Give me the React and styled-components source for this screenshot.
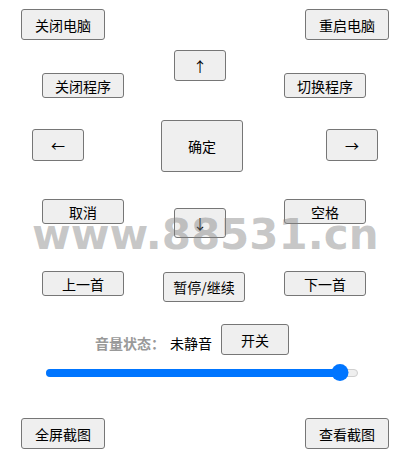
import React from "react";
import styled, { createGlobalStyle } from "styled-components";

const Global = createGlobalStyle`
  html, body { margin: 0; padding: 0; background: #fff; }
  body { font-family: "Noto Sans CJK SC", "Noto Sans", sans-serif; }
`;

const Page = styled.div`
  position: relative;
  width: 412px;
  height: 469px;
  padding-top: 9px;
  box-sizing: border-box;
  overflow: hidden;
`;

const Row = styled.div`
  display: flex;
  align-items: flex-start;
  justify-content: ${(p) => (p.$spread ? "space-between" : "flex-start")};
  padding-left: ${(p) => p.$pl || 0}px;
  padding-right: ${(p) => p.$pr || 0}px;
  margin-top: ${(p) => p.$mt || 0}px;
`;

const Btn = styled.button`
  box-sizing: border-box;
  width: ${(p) => p.$w}px;
  height: ${(p) => p.$h}px;
  margin-left: ${(p) => p.$ml || 0}px;
  margin-top: ${(p) => p.$mt || 0}px;
  flex: none;
  padding: 0;
  background: #efefef;
  border: 1px solid #767676;
  border-radius: 3px;
  color: #000;
  font-family: "Noto Sans CJK SC", "Noto Sans", sans-serif;
  font-size: 14px;
  line-height: 1;
  cursor: pointer;
`;

const VolumeRow = styled.div`
  display: flex;
  align-items: flex-end;
  padding-left: 95px;
  margin-top: 22px;
`;

const Label = styled.span`
  font-size: 14px;
  line-height: 20px;
  font-weight: bold;
  color: #999;
  margin-bottom: 2px;
`;

const Status = styled.span`
  font-size: 14px;
  line-height: 20px;
  color: #000;
  margin-bottom: 2px;
  margin-left: 5px;
  margin-right: 9px;
`;

const SliderWrap = styled.div`
  position: relative;
  width: 312px;
  height: 17px;
  margin: 9px 0 0 46px;
  display: flex;
  align-items: center;
`;

const Track = styled.div`
  position: relative;
  width: 100%;
  height: 8px;
  box-sizing: border-box;
  border-radius: 4px;
  background: #efefef;
  border: 1px solid #cfcfcf;
`;

const Fill = styled.div`
  position: absolute;
  left: -1px;
  top: -1px;
  height: 8px;
  border-radius: 4px;
  background: #0075ff;
`;

const Thumb = styled.div`
  position: absolute;
  top: 0;
  width: 17px;
  height: 17px;
  border-radius: 50%;
  background: #0075ff;
  transform: translateX(-50%);
`;

const Watermark = styled.div`
  position: absolute;
  left: 32px;
  top: 214px;
  font-family: "DejaVu Sans", sans-serif;
  font-weight: bold;
  font-size: 42px;
  line-height: 42px;
  color: rgba(128, 128, 128, 0.44);
  pointer-events: none;
  white-space: nowrap;
`;

export default function App() {
  const value = 0.968;
  const thumbX = 8.5 + (312 - 17) * value;
  return (
    <>
      <Global />
      <Page>
        <Row $spread $pl={21} $pr={23}>
          <Btn $w={84} $h={31}>关闭电脑</Btn>
          <Btn $w={84} $h={31}>重启电脑</Btn>
        </Row>
        <Row $pl={42} $mt={10}>
          <Btn $w={82} $h={25} $mt={23}>关闭程序</Btn>
          <Btn $w={52} $h={31} $ml={50}>↑</Btn>
          <Btn $w={82} $h={25} $ml={58} $mt={23}>切换程序</Btn>
        </Row>
        <Row $pl={32} $mt={22}>
          <Btn $w={52} $h={32} $mt={9}>←</Btn>
          <Btn $w={82} $h={52} $ml={77}>确定</Btn>
          <Btn $w={52} $h={32} $ml={83} $mt={9}>→</Btn>
        </Row>
        <Row $pl={42} $mt={27}>
          <Btn $w={82} $h={25}>取消</Btn>
          <Btn $w={52} $h={30} $ml={50} $mt={9}>↓</Btn>
          <Btn $w={82} $h={25} $ml={58}>空格</Btn>
        </Row>
        <Row $pl={42} $mt={33}>
          <Btn $w={82} $h={25}>上一首</Btn>
          <Btn $w={82} $h={30} $ml={39} $mt={1}>暂停/继续</Btn>
          <Btn $w={82} $h={25} $ml={39}>下一首</Btn>
        </Row>
        <VolumeRow>
          <Label>音量状态：</Label>
          <Status>未静音</Status>
          <Btn $w={68} $h={31}>开关</Btn>
        </VolumeRow>
        <SliderWrap>
          <Track>
            <Fill style={{ width: thumbX + 1 }} />
          </Track>
          <Thumb style={{ left: thumbX }} />
        </SliderWrap>
        <Row $spread $pl={21} $pr={23} $mt={37}>
          <Btn $w={84} $h={31}>全屏截图</Btn>
          <Btn $w={84} $h={31}>查看截图</Btn>
        </Row>
        <Watermark>www.88531.cn</Watermark>
      </Page>
    </>
  );
}
